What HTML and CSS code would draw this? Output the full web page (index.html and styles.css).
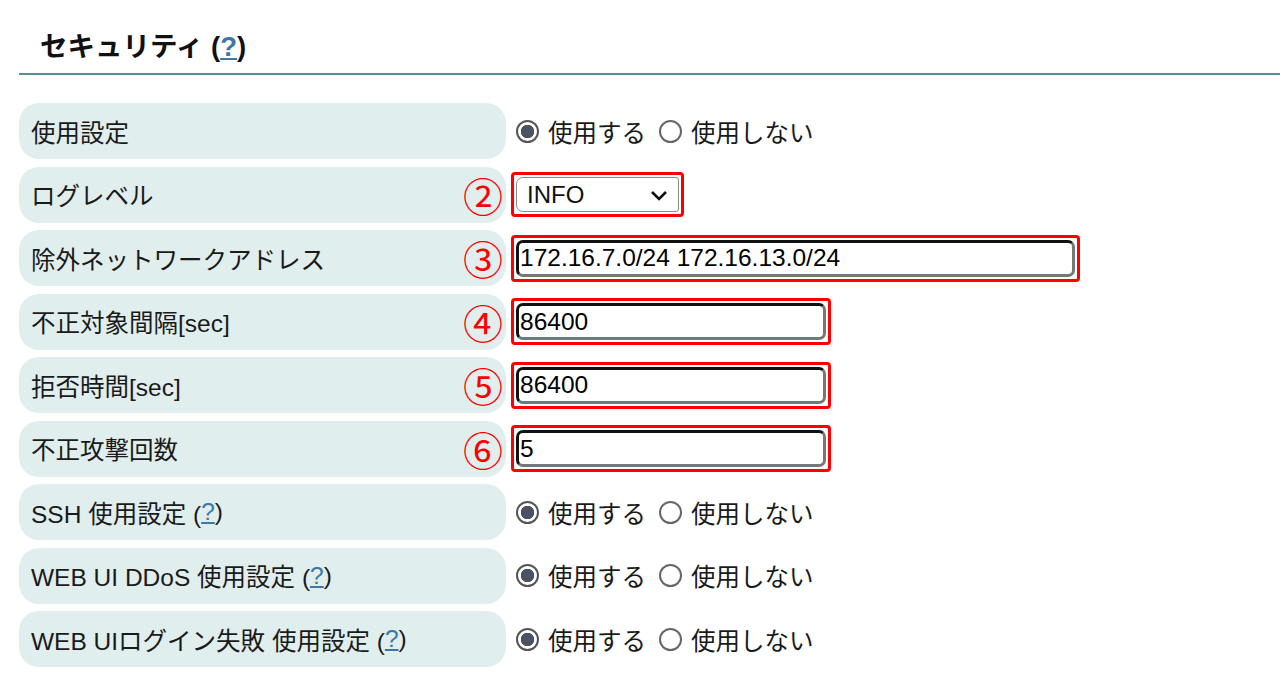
FILE: index.html
```html
<!DOCTYPE html>
<html lang="ja">
<head>
    <meta charset="UTF-8">
    <meta name="viewport" content="width=device-width, initial-scale=1.0">
    <title>セキュリティ</title>
    <link rel="stylesheet" href="styles.css">
</head>
<body>

    <div class="page">
        <h2 class="section-title">セキュリティ (<a href="#" class="help">?</a>)</h2>

        <div class="settings">
            <div class="label">使用設定</div>
            <div class="value">
                <label class="radio"><input type="radio" name="use" checked>使用する</label>
                <label class="radio"><input type="radio" name="use">使用しない</label>
            </div>

            <div class="label">ログレベル<span class="mark">②</span></div>
            <div class="value">
                <div class="hl">
                    <div class="select-wrap">
                        <select class="select">
                            <option>INFO</option>
                            <option>WARN</option>
                            <option>ERROR</option>
                            <option>DEBUG</option>
                        </select>
                        <svg class="chevron" width="18" height="11" viewBox="0 0 18 11"><path d="M2 2 L9 9 L16 2" fill="none" stroke="#111" stroke-width="2.6"/></svg>
                    </div>
                </div>
            </div>

            <div class="label">除外ネットワークアドレス<span class="mark">③</span></div>
            <div class="value">
                <div class="hl"><input type="text" class="field wide" value="172.16.7.0/24 172.16.13.0/24"></div>
            </div>

            <div class="label">不正対象間隔[sec]<span class="mark">④</span></div>
            <div class="value">
                <div class="hl"><input type="text" class="field" value="86400"></div>
            </div>

            <div class="label">拒否時間[sec]<span class="mark">⑤</span></div>
            <div class="value">
                <div class="hl"><input type="text" class="field" value="86400"></div>
            </div>

            <div class="label">不正攻撃回数<span class="mark">⑥</span></div>
            <div class="value">
                <div class="hl"><input type="text" class="field" value="5"></div>
            </div>

            <div class="label">SSH 使用設定 (<a href="#" class="help">?</a>)</div>
            <div class="value">
                <label class="radio"><input type="radio" name="ssh" checked>使用する</label>
                <label class="radio"><input type="radio" name="ssh">使用しない</label>
            </div>

            <div class="label">WEB UI DDoS 使用設定 (<a href="#" class="help">?</a>)</div>
            <div class="value">
                <label class="radio"><input type="radio" name="ddos" checked>使用する</label>
                <label class="radio"><input type="radio" name="ddos">使用しない</label>
            </div>

            <div class="label">WEB UIログイン失敗 使用設定 (<a href="#" class="help">?</a>)</div>
            <div class="value">
                <label class="radio"><input type="radio" name="login" checked>使用する</label>
                <label class="radio"><input type="radio" name="login">使用しない</label>
            </div>
        </div>
    </div>

</body>
</html>
```

FILE: styles.css
```css
body {
    margin: 0;
    padding: 0;
    background-color: #fff;
    color: #1a1a1a;
    font-family: "Liberation Sans", "Noto Sans CJK JP", Arial, sans-serif;
}
.page {
    padding-left: 19px;
}
.section-title {
    margin: 0;
    padding: 30px 0 9px 21px;
    font-size: 27.5px;
    line-height: 34px;
    font-weight: bold;
    color: #111;
    border-bottom: 2px solid #5e8c96;
}
.help {
    color: #3a78a8;
    text-decoration: underline;
}
.settings {
    display: grid;
    grid-template-columns: 487px 1fr;
    column-gap: 5px;
    row-gap: 7.5px;
    margin-top: 28px;
    grid-auto-rows: 56px;
}
.label {
    position: relative;
    display: flex;
    align-items: center;
    padding-left: 12px;
    background-color: #e1eeee;
    border-radius: 20px;
    font-size: 24.5px;
    color: #1a1a1a;
    white-space: pre;
}
.mark {
    position: absolute;
    right: 3px;
    top: 50%;
    transform: translateY(-50%);
    font-family: "Noto Sans CJK JP", sans-serif;
    font-size: 40px;
    line-height: 1;
    color: #f00;
}
.value {
    display: flex;
    align-items: center;
}
.radio {
    display: flex;
    align-items: center;
    margin-left: 5px;
    margin-right: 8px;
    font-size: 24.5px;
    color: #1a1a1a;
}
.radio input {
    appearance: none;
    -webkit-appearance: none;
    width: 23px;
    height: 23px;
    margin: 0 9px 0 0;
    border: 2px solid #666;
    border-radius: 50%;
    box-sizing: border-box;
    background: #fff;
}
.radio input:checked {
    border: 2px solid #555;
    background: radial-gradient(circle, #4a5363 0 6.5px, #fff 7px);
}
.hl {
    display: flex;
    padding: 2px;
    border: 3px solid #f00;
    border-radius: 4px;
}
.select-wrap {
    position: relative;
    display: flex;
}
.select {
    appearance: none;
    -webkit-appearance: none;
    width: 163px;
    height: 35px;
    padding: 0 0 0 10px;
    border: 1px solid #8a8a8a;
    border-radius: 7px 3px 3px 7px;
    background: #fff;
    font-family: "Liberation Sans", Arial, sans-serif;
    font-size: 24px;
    color: #111;
}
.chevron {
    position: absolute;
    right: 11px;
    top: 13px;
    pointer-events: none;
}
.field {
    width: 310px;
    height: 37px;
    box-sizing: border-box;
    padding: 0 1px;
    border-style: solid;
    border-width: 3px;
    border-color: #111 #777 #777 #111;
    border-radius: 7px;
    font-family: "Liberation Sans", Arial, sans-serif;
    font-size: 24.5px;
    color: #000;
    background: #fff;
}
.field.wide {
    width: 559px;
}
```
